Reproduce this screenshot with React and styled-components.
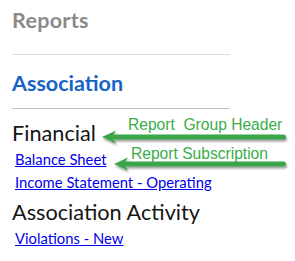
import React from "react";
import styled, { createGlobalStyle } from "styled-components";

const GlobalStyle = createGlobalStyle`
  body {
    margin: 0;
    background: #ffffff;
    font-family: Lato, "Liberation Sans", sans-serif;
  }
`;

const Page = styled.div`
  position: relative;
  width: 295px;
  height: 261px;
  overflow: hidden;
  background: #fff;
`;

const Panel = styled.div`
  width: 218px;
  padding: 7px 0 0 12px;
  display: flex;
  flex-direction: column;
`;

const Title = styled.div`
  font-size: 21.5px;
  font-weight: 700;
  letter-spacing: 0.3px;
  color: #8a8a8a;
  line-height: 26px;
  margin-bottom: 21px;
`;

const Divider = styled.div`
  height: 1px;
  background: ${(p) => (p.dark ? "#c2c2c2" : "#dcdce0")};
`;

const Section = styled.div`
  font-size: 21.5px;
  font-weight: 700;
  color: #1663c7;
  line-height: 28px;
  margin: 14px 0 11px;
`;

const GroupHeader = styled.div`
  font-size: 21.7px;
  color: #151515;
  line-height: 26px;
  margin-top: ${(p) => p.top}px;
`;

const Link = styled.a`
  display: block;
  font-size: 14.8px;
  color: #0000ee;
  text-decoration: underline;
  line-height: 20px;
  margin: 3px 0 0 3px;
  cursor: pointer;
`;

const Note = styled.div`
  position: absolute;
  left: ${(p) => p.x}px;
  top: ${(p) => p.y}px;
  font-family: "Liberation Sans", Arial, sans-serif;
  font-size: 15.6px;
  color: #3aac4a;
  white-space: pre;
  line-height: 18px;
`;

const Arrow = styled.svg`
  position: absolute;
  left: ${(p) => p.x}px;
  top: ${(p) => p.y}px;
  overflow: visible;
`;

const GreenArrow = ({ x, y, width, id }) => (
  <Arrow x={x} y={y} width={width} height={20} viewBox={`0 0 ${width} 20`}>
    <defs>
      <filter id={id} x="-10%" y="-60%" width="120%" height="220%">
        <feDropShadow dx="1" dy="2" stdDeviation="1.1" floodColor="#000" floodOpacity="0.4" />
      </filter>
    </defs>
    <path
      d={`M0 10 L14 3.5 L11.5 7.5 L${width - 2.5} 7.5 A2.5 2.5 0 0 1 ${width - 2.5} 12.5 L11.5 12.5 L14 16.5 Z`}
      fill="#3aa548"
      filter={`url(#${id})`}
    />
  </Arrow>
);

export default function App() {
  return (
    <Page>
      <GlobalStyle />
      <Panel>
        <Title>Reports</Title>
        <Divider />
        <Section>Association</Section>
        <Divider dark />
        <GroupHeader top={11}>Financial</GroupHeader>
        <Link>Balance Sheet</Link>
        <Link>Income Statement - Operating</Link>
        <GroupHeader top={7}>Association Activity</GroupHeader>
        <Link>Violations - New</Link>
      </Panel>
      <Note x={128} y={116}>Report  Group Header</Note>
      <GreenArrow id="a1" x={102} y={127} width={184} />
      <Note x={131} y={145}>Report Subscription</Note>
      <GreenArrow id="a2" x={114} y={154} width={172} />
    </Page>
  );
}
